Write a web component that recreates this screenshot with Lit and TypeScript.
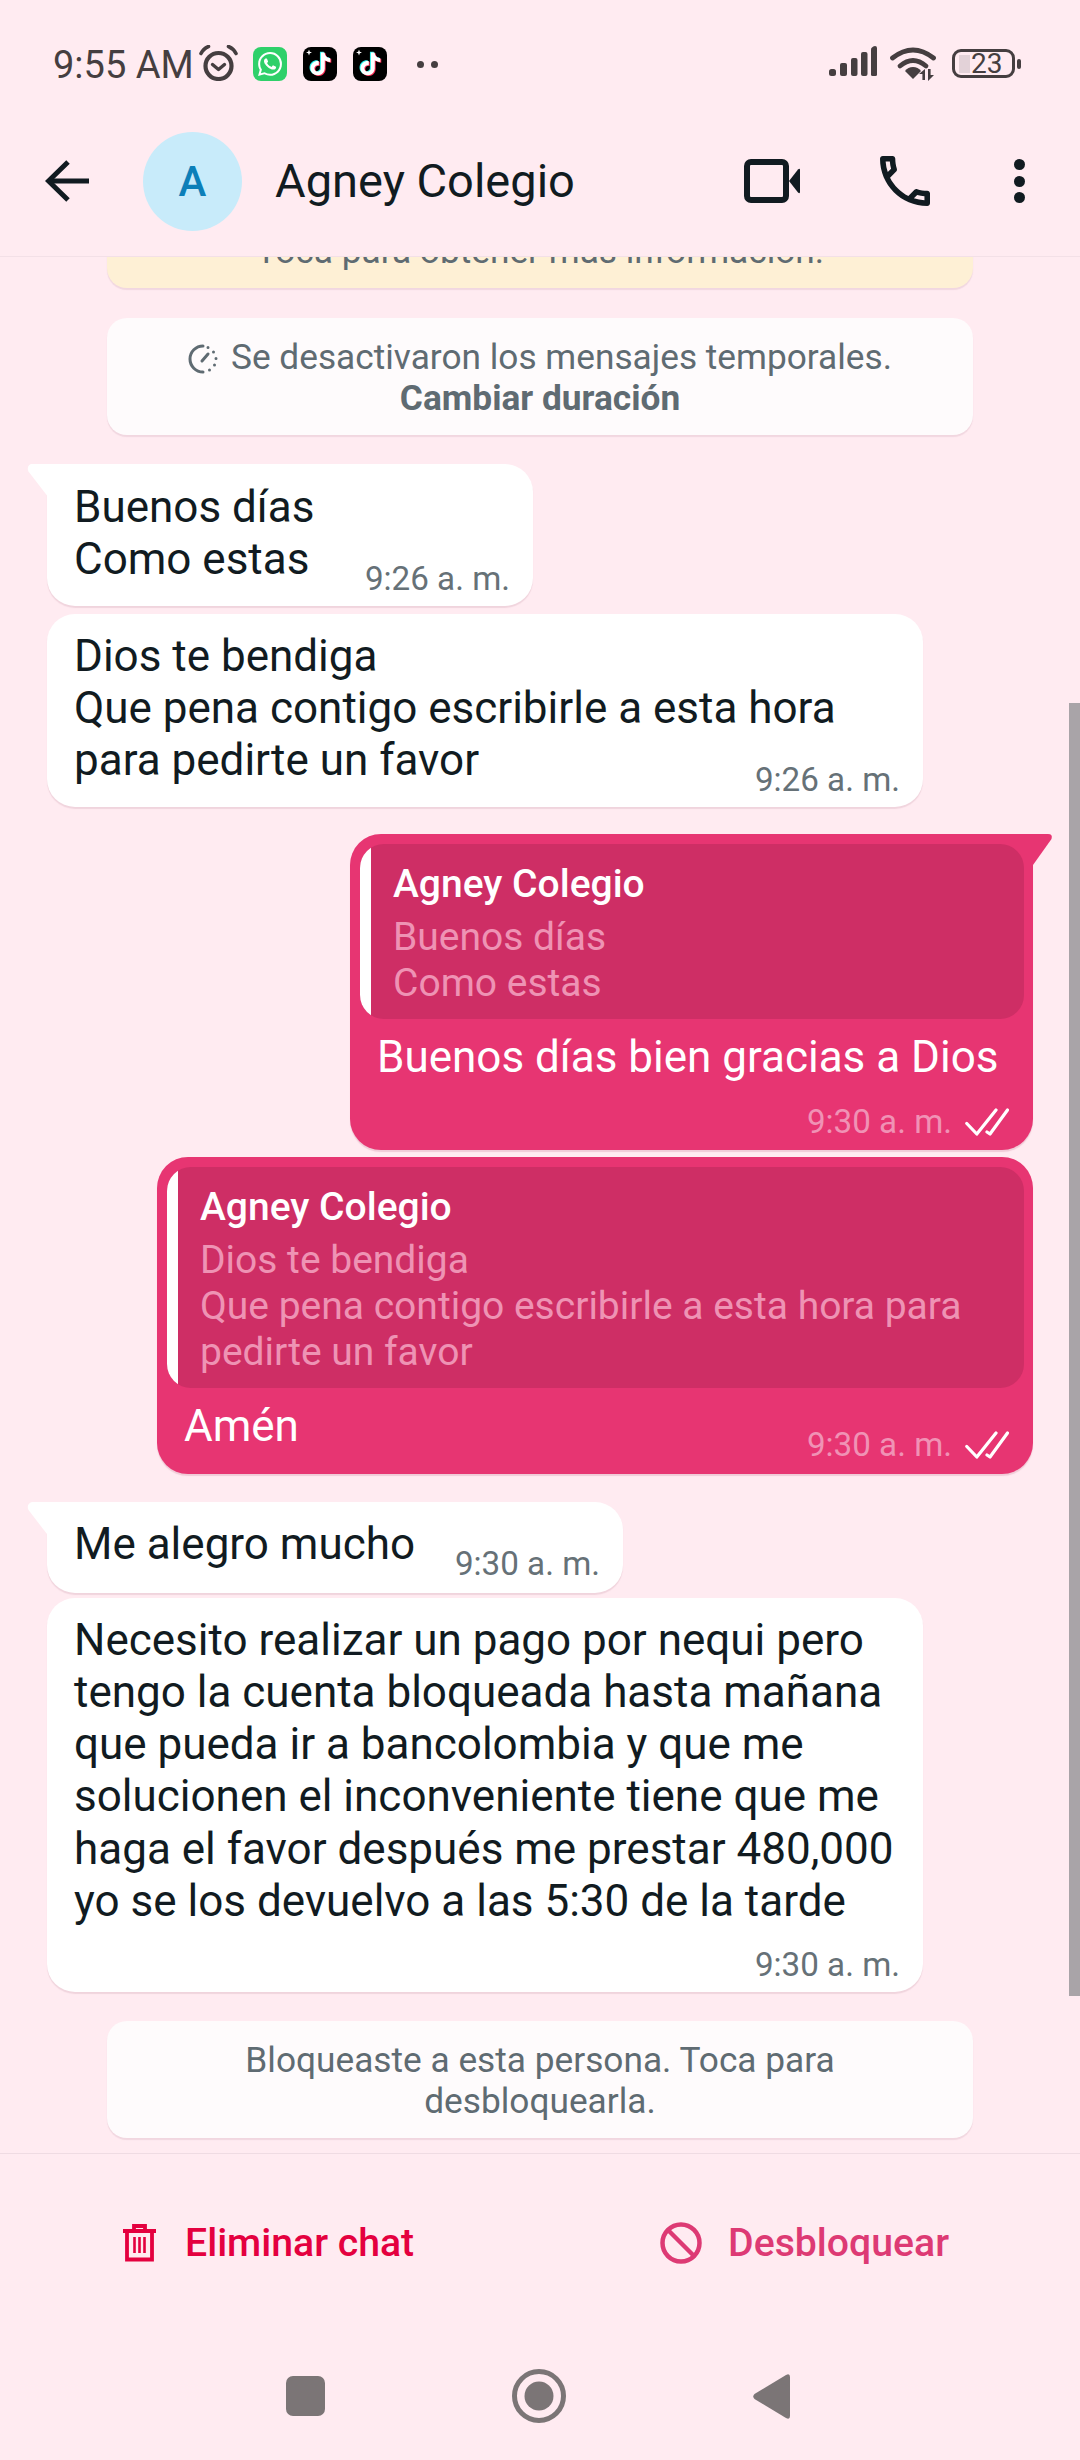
import { LitElement, html, css } from "lit";
import { customElement } from "lit/decorators.js";

const TIKTOK = "M12.525.02c1.31-.02 2.61-.01 3.91-.02.08 1.53.63 3.09 1.75 4.17 1.12 1.11 2.7 1.62 4.24 1.79v4.03c-1.44-.05-2.89-.35-4.2-.97-.57-.26-1.1-.59-1.62-.93-.01 2.92.01 5.84-.02 8.75-.08 1.4-.54 2.79-1.35 3.94-1.31 1.92-3.58 3.17-5.91 3.21-1.43.08-2.86-.31-4.08-1.03-2.02-1.19-3.44-3.37-3.65-5.71-.02-.5-.03-1-.01-1.49.18-1.9 1.12-3.72 2.58-4.96 1.66-1.44 3.98-2.13 6.15-1.72.02 1.48-.04 2.96-.04 4.44-.99-.32-2.15-.23-3.02.37-.63.41-1.11 1.04-1.36 1.75-.21.51-.15 1.07-.14 1.61.24 1.64 1.82 3.02 3.5 2.87 1.12-.01 2.19-.66 2.77-1.61.19-.33.4-.67.41-1.06.1-1.79.06-3.57.07-5.36.01-4.03-.01-8.05.02-12.07z";
const WA = "M17.472 14.382c-.297-.149-1.758-.867-2.03-.967-.273-.099-.471-.148-.67.15-.197.297-.767.966-.94 1.164-.173.199-.347.223-.644.075-.297-.15-1.255-.463-2.39-1.475-.883-.788-1.48-1.761-1.653-2.059-.173-.297-.018-.458.13-.606.134-.133.298-.347.446-.52.149-.174.198-.298.298-.497.099-.198.05-.371-.025-.52-.075-.149-.669-1.612-.916-2.207-.242-.579-.487-.5-.669-.51-.173-.008-.371-.01-.57-.01-.198 0-.52.074-.792.372-.272.297-1.04 1.016-1.04 2.479 0 1.462 1.065 2.875 1.213 3.074.149.198 2.096 3.2 5.077 4.487.709.306 1.262.489 1.694.625.712.227 1.36.195 1.871.118.571-.085 1.758-.719 2.006-1.413.248-.694.248-1.289.173-1.413-.074-.124-.272-.198-.57-.347m-5.421 7.403h-.004a9.87 9.87 0 01-5.031-1.378l-.361-.214-3.741.982.998-3.648-.235-.374a9.86 9.86 0 01-1.51-5.26c.001-5.45 4.436-9.884 9.888-9.884 2.64 0 5.122 1.03 6.988 2.898a9.825 9.825 0 012.893 6.994c-.003 5.45-4.437 9.884-9.885 9.884m8.413-18.297A11.815 11.815 0 0012.05 0C5.495 0 .16 5.335.157 11.892c0 2.096.547 4.142 1.588 5.945L.057 24l6.305-1.654a11.882 11.882 0 005.683 1.448h.005c6.554 0 11.89-5.335 11.893-11.893a11.821 11.821 0 00-3.48-8.413z";
const PHONE = "M6.54 5c.06.89.21 1.76.45 2.59l-1.2 1.2c-.41-1.2-.67-2.47-.76-3.79h1.51m9.86 12.02c.85.24 1.72.39 2.6.45v1.49c-1.32-.09-2.59-.35-3.8-.75l1.2-1.19M7.5 3H4c-.55 0-1 .45-1 1 0 9.39 7.61 17 17 17 .55 0 1-.45 1-1v-3.49c0-.55-.45-1-1-1-1.24 0-2.45-.2-3.57-.57-.1-.04-.21-.05-.31-.05-.26 0-.51.1-.71.29l-2.2 2.2c-2.83-1.45-5.15-3.76-6.59-6.59l2.2-2.2c.28-.28.36-.67.25-1.02C8.7 6.45 8.5 5.25 8.5 4c0-.55-.45-1-1-1z";

const tiktok = html`<svg class="app" width="34" height="34" viewBox="0 0 34 34">
  <rect width="34" height="34" rx="8" fill="#000"/>
  <g transform="translate(6 5.500) scale(.95)">
    <path d=${TIKTOK} fill="#25f4ee" transform="translate(-1 -.7)"/>
    <path d=${TIKTOK} fill="#fe2c55" transform="translate(1 .7)"/>
    <path d=${TIKTOK} fill="#fff"/>
  </g>
  <path d="M6 2.500l.8 2.200 2.200.8-2.200.8-.8 2.200-.8-2.200-2.200-.8 2.200-.8z" fill="#fff"/>
</svg>`;

const checks = html`<svg class="checks" width="44" height="28" viewBox="0 0 44 28" fill="none" stroke="#fff" stroke-width="3.200" stroke-linecap="round" stroke-linejoin="round">
  <path d="M1.800 15.500l10 10.500L31 2"/><path d="M22 24l3 2L42.500 2"/>
</svg>`;

@customElement("app-root")
export class AppRoot extends LitElement {
  static styles = css`
    :host { display: block; width: 1080px; height: 2460px; overflow: hidden; background: #ffebf1; font-family: Roboto, "Liberation Sans", sans-serif; color: #111b21; }
    .page { display: flex; flex-direction: column; height: 2460px; }
    svg { display: block; flex: none; }

    .status { height: 100px; flex: none; display: flex; align-items: flex-start; padding: 0 59px 0 53px; box-sizing: border-box; }
    .time { font-size: 38px; line-height: 44px; margin-top: 43px; color: #453e40; }
    .notif { display: flex; align-items: flex-start; margin-top: 45px; margin-left: 5px; }
    .notif .wa { margin: 2px 0 0 15px; }
    .notif .app { margin: 2px 0 0 16px; }
    .more { display: flex; gap: 7px; margin: 16px 0 0 30px; }
    .more i { width: 7px; height: 7px; border-radius: 50%; background: #453e40; }
    .sys { margin-left: auto; display: flex; align-items: flex-start; margin-top: 46px; }
    .sys .wifi { margin: 1px 0 0 13px; }
    .battery { margin: 3px 0 0 15px; width: 63px; height: 29px; border: 3.5px solid #453e40; border-radius: 9px; box-sizing: border-box; display: flex; align-items: center; padding-left: 4px; }
    .battery .lvl { width: 11px; height: 18px; background: #e3d2d8; flex: none; }
    .battery span { font-size: 28px; line-height: 22px; color: #453e40; margin-left: 1px; }
    .nub { width: 4px; height: 10px; border-radius: 2px; background: #453e40; margin: 13px 0 0 2px; }

    .head { height: 157px; flex: none; box-sizing: border-box; border-bottom: 1px solid #f3e0e7; display: flex; align-items: center; padding: 6px 0 0 45px; }
    .avatar { width: 99px; height: 99px; border-radius: 50%; background: #c8ebfa; color: #0c7fb8; display: flex; align-items: center; justify-content: center; font-size: 42px; font-weight: 500; margin-left: 54px; }
    .title { font-size: 47px; margin-left: 33px; line-height: 56px; }
    .tools { margin-left: auto; display: flex; align-items: center; }
    .tools .ph { margin-left: 80px; }
    .dots { display: flex; flex-direction: column; gap: 5.5px; margin: 0 55px 0 84px; }
    .dots i { width: 11px; height: 11px; border-radius: 50%; background: #111b21; }

    .chat { flex: 1; min-height: 0; overflow: hidden; position: relative; display: flex; flex-direction: column; }
    .bar { position: absolute; right: 0; top: 446px; width: 11px; height: 1293px; background: #a9a4a8; }
    .card { width: 866px; box-sizing: border-box; align-self: flex-start; margin-left: 107px; border-radius: 20px; background: #fefbfc; padding: 19px 20px 15px; text-align: center; color: #5f6b72; font-size: 35.25px; line-height: 41.5px; box-shadow: 0 2px 1px rgba(170,110,135,.16); }
    .card.warn { background: #fef0d5; margin-top: -45px; }
    .card b { font-weight: 700; }
    .card svg { display: inline-block; vertical-align: -5px; margin-right: 13px; }

    .bubble { position: relative; box-sizing: border-box; border-radius: 28px; font-size: 44px; line-height: 52.1px; flex: none; }
    .in { background: #fff; margin-left: 47px; align-self: flex-start; padding: 16px 23px 7px 27px; box-shadow: 0 2px 1px rgba(170,110,135,.18); }
    .in.tail { border-top-left-radius: 0; }
    .in.tail::before { content: ""; position: absolute; left: -20px; top: 0; width: 20px; height: 32px; background: #fff; clip-path: path("M5 0H20V32L1.5 8Q-1 2 5 0Z"); }
    .out { background: #e73572; color: #fff; margin-right: 47px; align-self: flex-end; border-radius: 31px; padding: 10px 9px 8px 10px; box-shadow: 0 2px 1px rgba(170,60,100,.18); }
    .out.tail { border-top-right-radius: 0; }
    .out.tail::after { content: ""; position: absolute; right: -19px; top: 0; width: 19px; height: 31px; background: #e73572; clip-path: path("M0 0H15Q20 0 18.5 5L0 31Z"); }
    .w486 { width: 486px; padding-top: 17px; padding-bottom: 7px; }
    .w486 > .txt { padding-bottom: 16px; }
    .w576 { width: 576px; padding-bottom: 9px; }
    .w876 { width: 876px; } .w683 { width: 683px; }
    .gap30 { margin-top: 30px; } .gap29 { margin-top: 29px; } .gap28 { margin-top: 28px; } .gap27 { margin-top: 27px; } .gap5 { margin-top: 5px; } .gap7 { margin-top: 7px; } .gap8 { margin-top: 8px; }

    .row { display: flex; justify-content: space-between; align-items: flex-end; }
    .row > .txt { padding-bottom: 14px; }
    .meta { font-size: 33.2px; line-height: 40px; color: #667177; white-space: nowrap; display: flex; align-items: center; justify-content: flex-end; }
    .meta.over { margin-top: -26px; }
    .meta.below { margin-top: 18px; }
    .out .meta { color: #f092b5; }
    .checks { margin-left: 13px; }
    .quote { display: flex; overflow: hidden; background: #ce2e65; border-radius: 24px; font-size: 39px; line-height: 46px; color: #ee93b4; }
    .qbar { width: 11px; flex: none; background: #fff; }
    .qtxt { padding: 17px 10px 13px 22px; }
    .qname { color: #fff; font-weight: 500; margin-bottom: 7px; }
    .outbody { padding: 12px 25px 0 17px; white-space: nowrap; }
    .outrow { display: flex; justify-content: space-between; padding: 12px 15px 1px 17px; }
    .outrow .meta { margin-top: 25px; }
    .outmeta { margin: 19px 15px 0 0; }

    .line { height: 1px; flex: none; background: #efdbe3; }
    .actions { height: 178px; flex: none; display: flex; justify-content: space-between; align-items: center; padding: 0 131px 0 123px; box-sizing: border-box; font-size: 39.2px; font-weight: 500; }
    .act { display: flex; align-items: center; }
    .del { color: #e4003f; gap: 29px; }
    .unb { color: #dd3a74; gap: 26px; }
    .nav { height: 128px; flex: none; display: flex; align-items: center; padding-left: 286px; gap: 187px; box-sizing: border-box; }
  `;

  render() {
    return html`<div class="page">
      <div class="status">
        <span class="time">9:55 AM</span>
        <div class="notif">
          <svg width="39" height="36" viewBox="0 0 39 36" fill="none" stroke="#453e40" stroke-linecap="round" stroke-linejoin="round">
            <circle cx="19.500" cy="21" r="13" stroke-width="4.200"/>
            <path d="M2 8.500Q4.500 3.500 9.500 1.500M37 8.500Q34.500 3.500 29.500 1.500" stroke-width="3.600"/>
            <path d="M13.500 19.500l6 5 6-5" stroke-width="3.400"/>
          </svg>
          <svg class="wa" width="34" height="34" viewBox="0 0 34 34">
            <rect width="34" height="34" rx="8" fill="#2fd06a"/>
            <g transform="translate(5 5)"><path d=${WA} fill="#fff"/></g>
          </svg>
          ${tiktok}
          ${tiktok}
          <div class="more"><i></i><i></i></div>
        </div>
        <div class="sys">
          <svg width="48" height="30" viewBox="0 0 48 30" fill="#453e40">
            <rect x="0" y="23" width="7" height="7" rx="2.500"/>
            <rect x="11" y="17" width="7" height="13" rx="2"/>
            <rect x="22" y="12" width="6.500" height="18" rx="2"/>
            <rect x="32" y="6" width="6.500" height="24" rx="2"/>
            <path d="M42 3.500Q42 1 46 0Q48 0 48 2V28.500Q48 30 46.500 30H43.500Q42 30 42 28.500Z"/>
          </svg>
          <svg class="wifi" width="47" height="34" viewBox="0 0 47 34">
            <g fill="none" stroke="#453e40" stroke-width="4.800" stroke-linecap="round">
              <path d="M2.500 11Q23 -5 43.500 11"/>
              <path d="M10 19Q23 8 36 19"/>
            </g>
            <path d="M23 20Q28 20 31 24L23 32L15 24Q18 20 23 20Z" fill="#453e40"/>
            <path d="M35 22v11h-2.600v-6l-3.400 0zM38 22h2.600v6l3.400 0l-6 6z" fill="#453e40"/>
          </svg>
          <div class="battery"><div class="lvl"></div><span>23</span></div>
          <div class="nub"></div>
        </div>
      </div>

      <div class="head">
        <svg width="44" height="42" viewBox="0 0 44 42" fill="none" stroke="#111b21" stroke-width="5">
          <path d="M44 21H4"/><path d="M23 2L3.500 21L23 40"/>
        </svg>
        <div class="avatar">A</div>
        <div class="title">Agney Colegio</div>
        <div class="tools">
          <svg width="56" height="44" viewBox="0 0 56 44">
            <rect x="3" y="3" width="39" height="38" rx="4" fill="none" stroke="#111b21" stroke-width="6"/>
            <path d="M45 22L54 10.500Q56 9 56 11V33Q56 35 54 33.500Z" fill="#111b21"/>
          </svg>
          <svg class="ph" width="50" height="50" viewBox="3 3 18 18"><path d=${PHONE} fill="#111b21"/></svg>
          <div class="dots"><i></i><i></i><i></i></div>
        </div>
      </div>

      <div class="chat">
        <div class="card warn">Toca para obtener más información.</div>
        <div class="card gap30">
          <svg width="30" height="30" viewBox="0 0 30 30" fill="none" stroke="#5f6b72" stroke-linecap="round">
            <path d="M15 2A13 13 0 1 0 15 28" stroke-width="3"/>
            <path d="M14 17L20 10" stroke-width="3"/>
            <path d="M20 3.500v0M25.500 8v0M28 14.500v0M26.500 21v0M21.500 26v0" stroke-width="3"/>
          </svg>Se desactivaron los mensajes temporales.<br><b>Cambiar duración</b>
        </div>

        <div class="bubble in tail w486 gap29 row">
          <div class="txt">Buenos días<br>Como estas</div>
          <div class="meta">9:26 a. m.</div>
        </div>
        <div class="bubble in w876 gap8">
          <div>Dios te bendiga<br>Que pena contigo escribirle a esta hora<br>para pedirte un favor</div>
          <div class="meta over">9:26 a. m.</div>
        </div>

        <div class="bubble out tail w683 gap27">
          <div class="quote"><div class="qbar"></div>
            <div class="qtxt">
              <div class="qname">Agney Colegio</div>
              Buenos días<br>Como estas
            </div>
          </div>
          <div class="outbody">Buenos días bien gracias a Dios</div>
          <div class="meta outmeta">9:30 a. m.${checks}</div>
        </div>
        <div class="bubble out w876 gap7">
          <div class="quote"><div class="qbar"></div>
            <div class="qtxt">
              <div class="qname">Agney Colegio</div>
              Dios te bendiga<br>Que pena contigo escribirle a esta hora para<br>pedirte un favor
            </div>
          </div>
          <div class="outrow">
            <div>Amén</div>
            <div class="meta">9:30 a. m.${checks}</div>
          </div>
        </div>

        <div class="bubble in tail w576 gap28 row">
          <div class="txt">Me alegro mucho</div>
          <div class="meta">9:30 a. m.</div>
        </div>
        <div class="bubble in w876 gap5">
          <div>Necesito realizar un pago por nequi pero<br>tengo la cuenta bloqueada hasta mañana<br>que pueda ir a bancolombia y que me<br>solucionen el inconveniente tiene que me<br>haga el favor después me prestar 480,000<br>yo se los devuelvo a las 5:30 de la tarde</div>
          <div class="meta below">9:30 a. m.</div>
        </div>

        <div class="card gap29">Bloqueaste a esta persona. Toca para<br>desbloquearla.</div>
        <div class="bar"></div>
      </div>

      <div class="line"></div>
      <div class="actions">
        <div class="act del">
          <svg width="33" height="38" viewBox="0 0 33 38" fill="none" stroke="#e4003f" stroke-width="3.800">
            <path d="M0 7H33" /><path d="M11 6V2H22V6"/>
            <path d="M4 7V35.500H29V7"/>
            <path d="M11.500 13V29M16.500 13V29M21.500 13V29" stroke-width="2.600"/>
          </svg>
          <span>Eliminar chat</span>
        </div>
        <div class="act unb">
          <svg width="42" height="42" viewBox="0 0 42 42" fill="none" stroke="#dd3a74" stroke-width="4.500">
            <circle cx="21" cy="21" r="18.500"/><path d="M8 8L34 34"/>
          </svg>
          <span>Desbloquear</span>
        </div>
      </div>
      <div class="nav">
        <svg width="39" height="40" viewBox="0 0 39 40"><rect width="39" height="40" rx="7" fill="#7b7576"/></svg>
        <svg width="54" height="54" viewBox="0 0 54 54"><circle cx="27" cy="27" r="24.500" fill="none" stroke="#7b7576" stroke-width="5"/><circle cx="27" cy="27" r="14.500" fill="#7b7576"/></svg>
        <svg width="37" height="45" viewBox="0 0 37 45"><path d="M1.500 20L33 1Q37 -1 37 3V42Q37 46 33 44L1.500 25Q-1 22.500 1.500 20Z" fill="#7b7576"/></svg>
      </div>
    </div>`;
  }
}
